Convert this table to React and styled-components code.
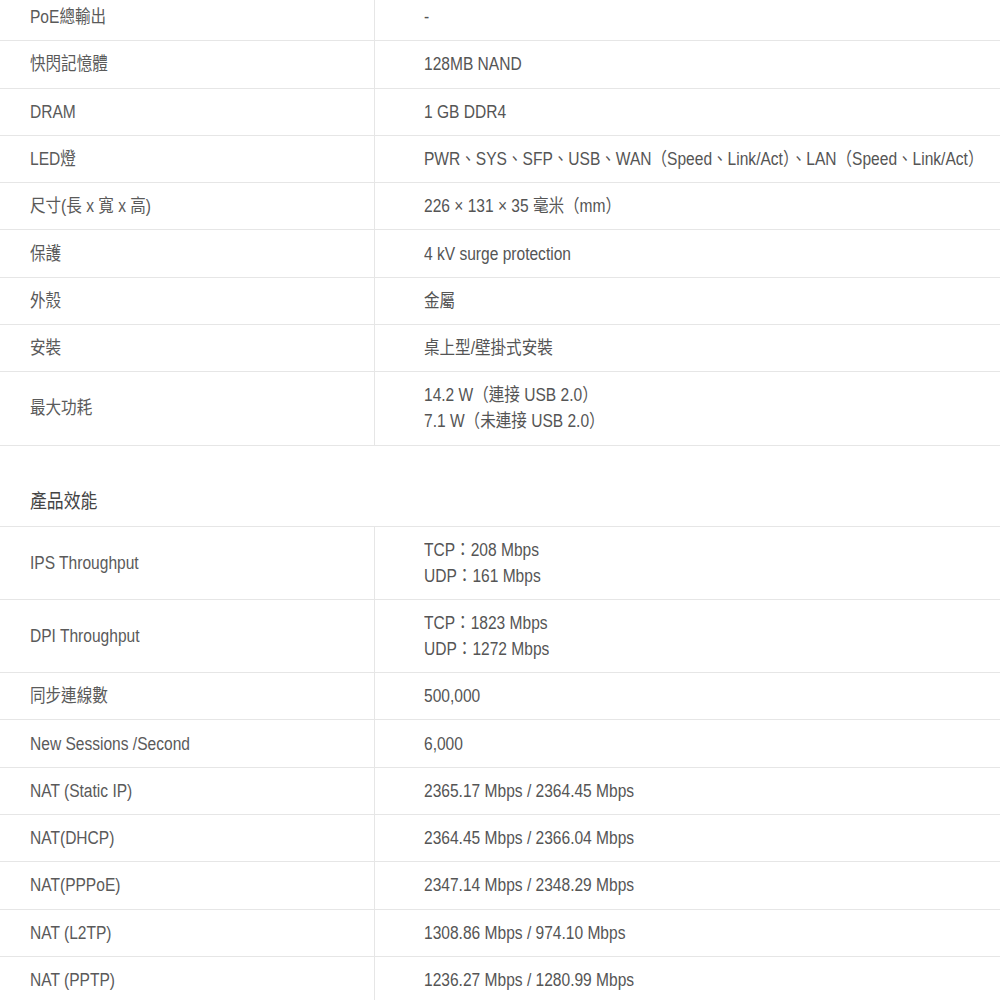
import React from 'react';
import styled, { createGlobalStyle } from 'styled-components';

const GlobalStyle = createGlobalStyle`
  html, body {
    margin: 0;
    padding: 0;
    background: #fff;
  }
  body {
    font-family: 'Liberation Sans', Arial, 'Noto Sans CJK TC', sans-serif;
    color: #555;
    overflow: hidden;
  }
`;

const hardware = [
  ['PoE總輸出', ['-']],
  ['快閃記憶體', ['128MB NAND']],
  ['DRAM', ['1 GB DDR4']],
  ['LED燈', ['PWR、SYS、SFP、USB、WAN（Speed、Link/Act）、LAN（Speed、Link/Act）']],
  ['尺寸(長 x 寬 x 高)', ['226 × 131 × 35 毫米（mm）']],
  ['保護', ['4 kV surge protection']],
  ['外殼', ['金屬']],
  ['安裝', ['桌上型/壁掛式安裝']],
  ['最大功耗', ['14.2 W（連接 USB 2.0）', '7.1 W（未連接 USB 2.0）']],
];

const performance = [
  ['IPS Throughput', ['TCP：208 Mbps', 'UDP：161 Mbps']],
  ['DPI Throughput', ['TCP：1823 Mbps', 'UDP：1272 Mbps']],
  ['同步連線數', ['500,000']],
  ['New Sessions /Second', ['6,000']],
  ['NAT (Static IP)', ['2365.17 Mbps / 2364.45 Mbps']],
  ['NAT(DHCP)', ['2364.45 Mbps / 2366.04 Mbps']],
  ['NAT(PPPoE)', ['2347.14 Mbps / 2348.29 Mbps']],
  ['NAT (L2TP)', ['1308.86 Mbps / 974.10 Mbps']],
  ['NAT (PPTP)', ['1236.27 Mbps / 1280.99 Mbps']],
];

const SpecTable = ({ rows }) => (
  <Table>
    <tbody>
      {rows.map(([label, lines]) => (
        <Row key={label}>
          <Label>
            <Text>{label}</Text>
          </Label>
          <Value>
            {lines.map((line) => (
              <Line key={line}>
                <Text>{line}</Text>
              </Line>
            ))}
          </Value>
        </Row>
      ))}
    </tbody>
  </Table>
);

const App = () => (
  <>
    <GlobalStyle />
    <Page>
      <SpecTable rows={hardware} />
      <SectionTitle>
        <Text>產品效能</Text>
      </SectionTitle>
      <SpecTable rows={performance} />
    </Page>
  </>
);

export default App;

const Page = styled.div`
  width: 1000px;
  margin-top: -6px;
  overflow: hidden;
`;

const Table = styled.table`
  width: 100%;
  border-collapse: collapse;
  table-layout: fixed;
  font-size: 18px;
`;

const Row = styled.tr`
  border-bottom: 1px solid #e6e6e6;
`;

// the source face is a narrow sans; squeeze the text sideways to match
const Text = styled.span`
  display: inline-block;
  transform: scaleX(0.864);
  transform-origin: left center;
  white-space: nowrap;
`;

const Label = styled.td`
  width: 344px;
  padding: 10.15px 0 10.15px 30px;
  line-height: 26px;
  vertical-align: middle;
  color: #5a5a5a;
  border-right: 1px solid #e6e6e6;
`;

const Value = styled.td`
  padding: 10.15px 0 10.15px 49px;
  line-height: 26px;
  vertical-align: middle;
  color: #555;
  white-space: nowrap;
  overflow: hidden;
`;

const Line = styled.div``;

const SectionTitle = styled.h3`
  margin: 0;
  padding: 42px 0 12px 30px;
  font-size: 19.5px;
  font-weight: normal;
  line-height: 26px;
  color: #444;
  border-bottom: 1px solid #e6e6e6;
`;
